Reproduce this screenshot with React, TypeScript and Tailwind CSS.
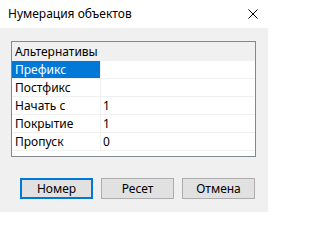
import React from "react";

type Row = { label: string; value: string; selected?: boolean };

const rows: Row[] = [
  { label: "Префикс", value: "", selected: true },
  { label: "Постфикс", value: "" },
  { label: "Начать с", value: "1" },
  { label: "Покрытие", value: "1" },
  { label: "Пропуск", value: "0" },
];

const DialogButton = ({ label, primary }: { label: string; primary?: boolean }) => (
  <button
    className={
      "w-[73px] h-[21px] bg-[#e1e1e1] text-[12px] leading-none text-black " +
      (primary ? "border-2 border-[#0078d7]" : "border border-[#adadad]")
    }
  >
    {label}
  </button>
);

export default function App() {
  return (
    <div
      className="w-[268px] h-[212px] bg-[#f0f0f0] flex flex-col text-black"
      style={{ fontFamily: '"Noto Sans", "Open Sans", sans-serif' }}
    >
      {/* title bar */}
      <div className="h-[28px] bg-white flex items-center justify-between pl-[8px] pr-[10px]">
        <span className="text-[12px] leading-none">Нумерация объектов</span>
        <svg width="10" height="10" viewBox="0 0 10 10" className="mr-[0px]">
          <path d="M0.5 0.5 L9.5 9.5 M9.5 0.5 L0.5 9.5" stroke="#000" strokeWidth="1" />
        </svg>
      </div>

      {/* property grid */}
      <div className="mt-[13px] ml-[11px] w-[245px] h-[116px] border border-[#828790] bg-white flex flex-col">
        <div className="h-[19px] bg-[#f0f0f0] flex items-center pl-[3px] text-[12px] leading-none">
          Альтернативы
        </div>
        {rows.map((r) => (
          <div key={r.label} className="h-[18px] flex border-b border-[#f0f0f0] text-[12px] leading-none">
            <div
              className={
                "w-[89px] flex items-center pl-[3px] border-r border-[#f0f0f0] " +
                (r.selected ? "bg-[#0078d7] text-white" : "")
              }
            >
              {r.label}
            </div>
            <div className="flex-1 flex items-center pl-[2px]">{r.value}</div>
          </div>
        ))}
      </div>

      {/* buttons */}
      <div className="mt-[21px] ml-[20px] flex gap-[8px]">
        <DialogButton label="Номер" primary />
        <DialogButton label="Ресет" />
        <DialogButton label="Отмена" />
      </div>
    </div>
  );
}
